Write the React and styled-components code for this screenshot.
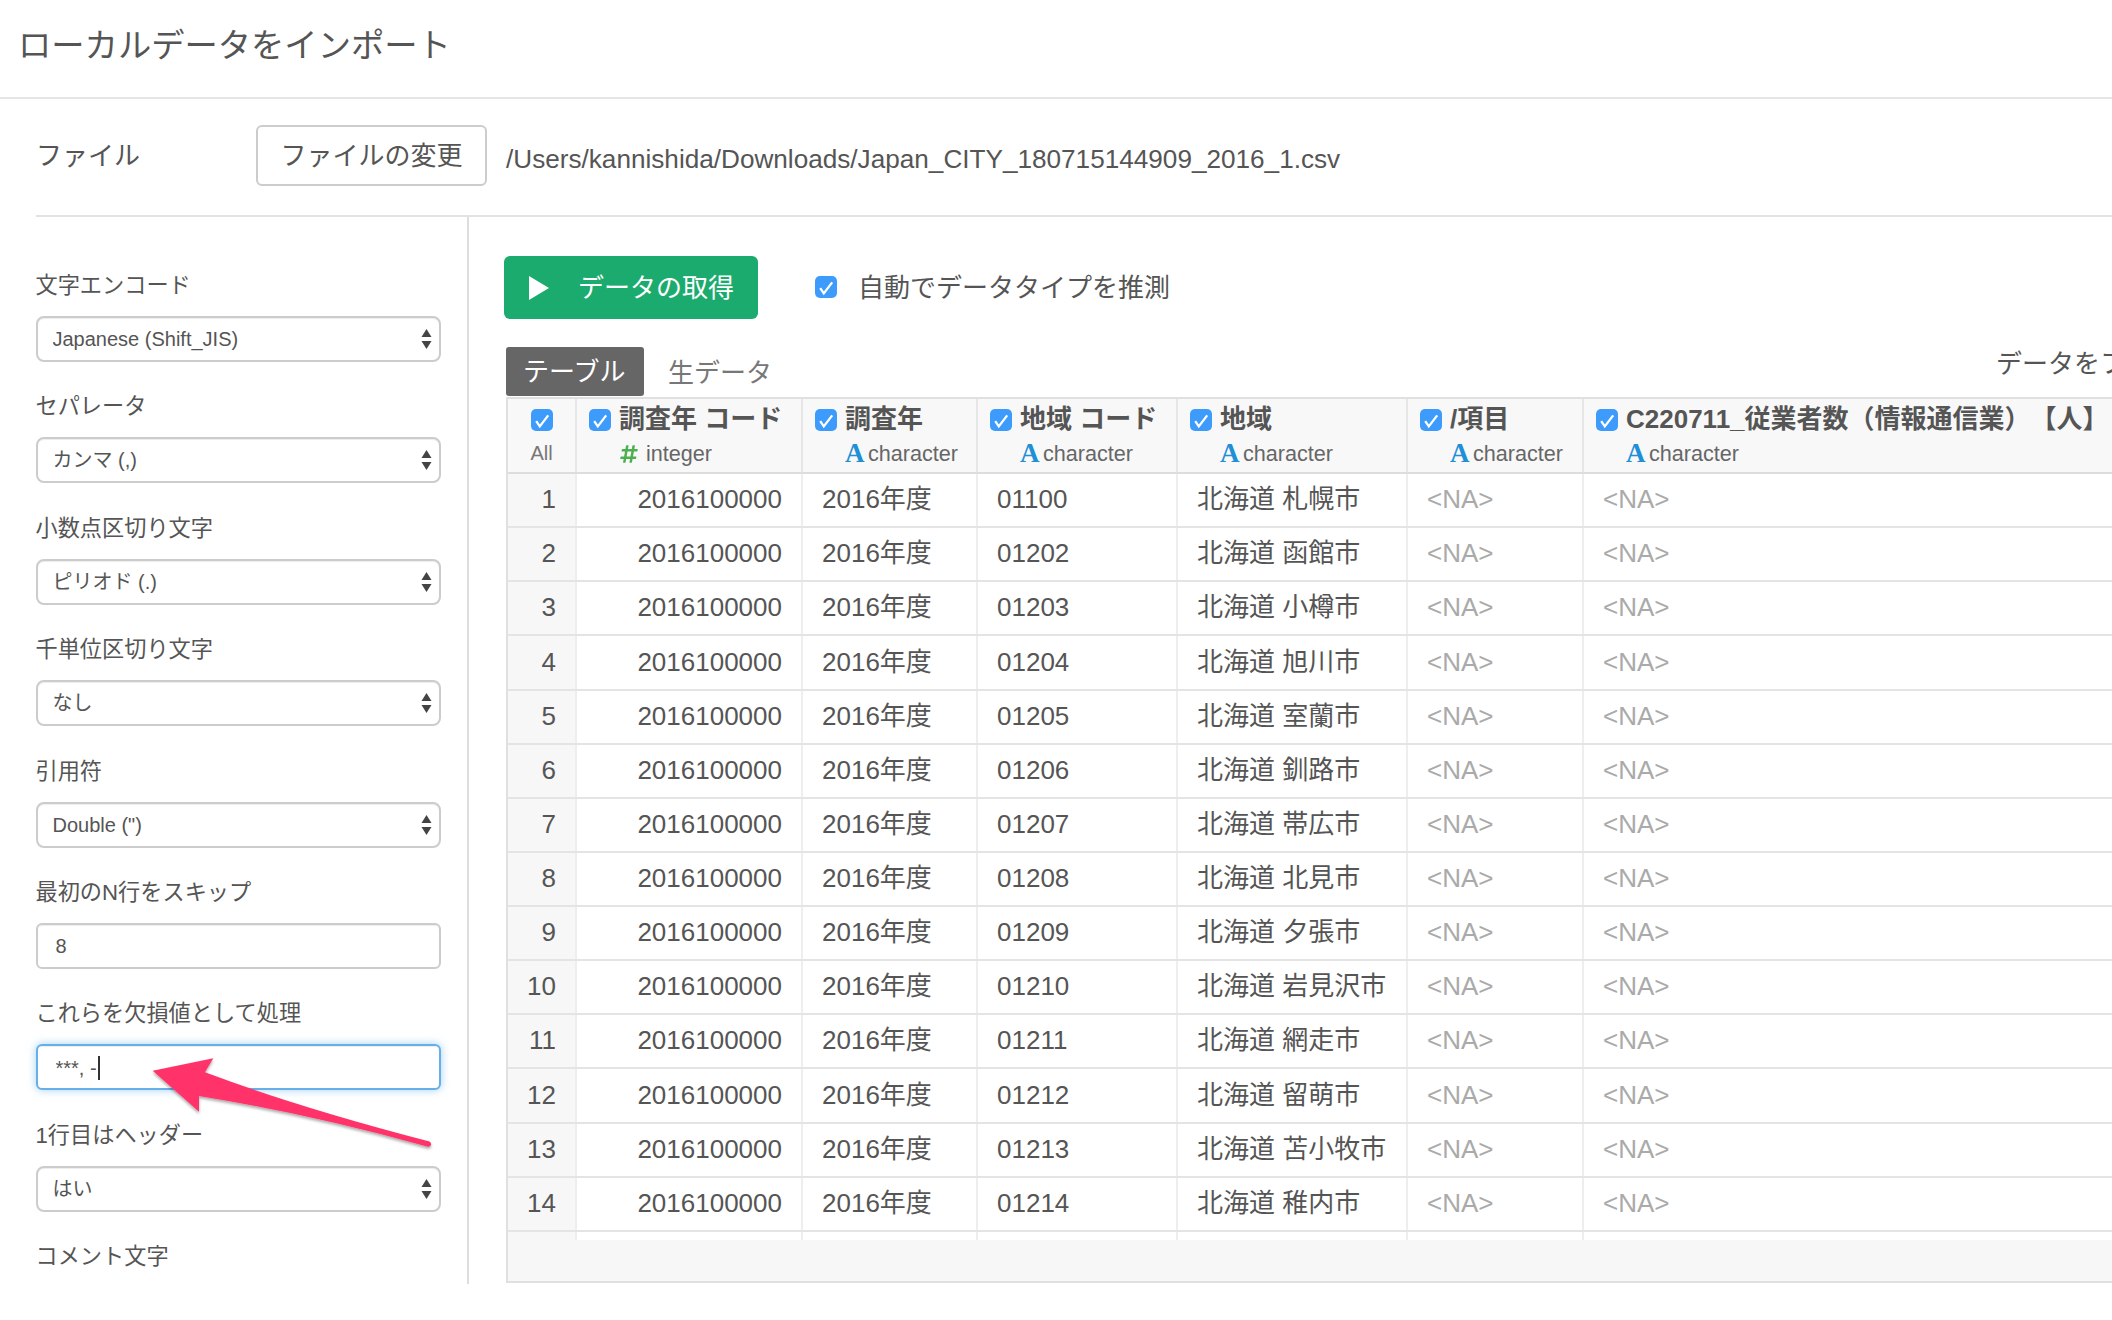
import React from "react";
import styled, { createGlobalStyle } from "styled-components";
import { FaHashtag } from "react-icons/fa";

const GlobalStyle = createGlobalStyle`
  html, body { margin: 0; padding: 0; background: #fff; }
  body {
    width: 2112px;
    height: 1320px;
    overflow: hidden;
    font-family: "Liberation Sans", "Noto Sans CJK JP", sans-serif;
    line-height: 1.3;
    text-spacing-trim: space-all;
    color: #555;
  }
  * { box-sizing: border-box; }
`;

const Page = styled.div`
  position: relative;
  width: 2112px;
  height: 1320px;
  overflow: hidden;
`;

const TitleBar = styled.header`
  height: 99px;
  padding: 0 0 6px 18px;
  display: flex;
  align-items: center;
  border-bottom: 2px solid #e5e5e5;
`;

const Title = styled.h1`
  margin: 0;
  font-size: 33.3px;
  font-weight: 400;
  color: #555;
`;

const FileRow = styled.div`
  height: 118px;
  margin-left: 36px;
  padding-bottom: 3px;
  display: flex;
  align-items: center;
  border-bottom: 2px solid #e2e2e2;
`;

const FileLabel = styled.div`
  width: 220px;
  padding-top: 2px;
  font-size: 26px;
  color: #555;
`;

const FileButton = styled.button`
  width: 231px;
  height: 61px;
  padding: 2px 0 0;
  border: 2px solid #ccc;
  border-radius: 6px;
  background: #fff;
  font: inherit;
  font-size: 26px;
  color: #555;
`;

const FilePath = styled.div`
  margin: 6px 0 0 19px;
  font-size: 26.15px;
  color: #555;
  white-space: nowrap;
`;

const Body = styled.div`
  display: flex;
  height: 1067px;
`;

const Sidebar = styled.aside`
  flex: 0 0 469px;
  height: 100%;
  padding: 52px 0 0 35.5px;
  border-right: 2px solid #ddd;
  overflow: hidden;
`;

const Field = styled.div`
  width: 405px;
  margin-bottom: 28.4px;
`;

const FieldLabel = styled.label`
  display: block;
  height: 32px;
  margin-bottom: 15px;
  font-size: 22.2px;
  line-height: 34px;
  color: #555;
  white-space: nowrap;
`;

const SelectWrap = styled.div`
  position: relative;
  height: 46px;
`;

const Select = styled.select`
  width: 100%;
  height: 46px;
  padding: 0 30px 0 15px;
  appearance: none;
  border: 2px solid #ccc;
  border-radius: 8px;
  background: #fff;
  box-shadow: inset 0 1px 1px rgba(0, 0, 0, 0.075);
  font: inherit;
  font-size: 20px;
  color: #555;
`;

const SelectArrows = styled.svg`
  position: absolute;
  top: 13px;
  right: 9px;
  width: 11px;
  height: 20px;
  pointer-events: none;
`;

const Input = styled.input`
  width: 100%;
  height: 46px;
  padding: 2px 18px 0;
  border: 2px solid ${(p) => (p.$focused ? "#66afe9" : "#ccc")};
  border-radius: 6px;
  outline: none;
  background: #fff;
  box-shadow: ${(p) =>
    p.$focused
      ? "inset 0 1px 1px rgba(0,0,0,.075), 0 0 8px rgba(102,175,233,.6)"
      : "inset 0 1px 1px rgba(0,0,0,.075)"};
  font: inherit;
  font-size: 20px;
  color: #555;
`;

const Caret = styled.span`
  position: absolute;
  left: 62px;
  top: 12px;
  width: 2px;
  height: 24px;
  background: #333;
`;

const Main = styled.main`
  flex: 1;
  min-width: 0;
  padding: 39px 0 0 35px;
  overflow: hidden;
`;

const ActionRow = styled.div`
  display: flex;
  align-items: center;
  height: 63px;
`;

const RunButton = styled.button`
  width: 254px;
  height: 63px;
  padding: 0 0 0 25px;
  display: flex;
  align-items: center;
  gap: 29px;
  border: none;
  border-radius: 6px;
  background: #1cab6e;
  font: inherit;
  font-size: 26px;
  color: #fff;
`;

const LowerText = styled.span`
  padding-top: 2px;
`;

const AutoLabel = styled.div`
  margin-left: 57px;
  display: flex;
  align-items: center;
  gap: 21px;
  font-size: 26px;
  color: #555;
`;

const Box = styled.span`
  flex: 0 0 auto;
  display: inline-flex;
  width: 22px;
  height: 22px;
  border-radius: 5px;
  background: #3d9bfb;
`;

const TabBar = styled.div`
  margin: 28px 0 1px 2px;
  display: flex;
  align-items: flex-end;
  height: 49px;
  width: 1640px;
`;

const Tabs = styled.div`
  flex: 0 0 1490px;
  display: flex;
  align-items: stretch;
  height: 49px;
`;

const Tab = styled.div`
  width: 138px;
  display: flex;
  align-items: center;
  padding-left: ${(p) => (p.$active ? "17px" : "24px")};
  padding-top: ${(p) => (p.$active ? "2px" : "5px")};
  border-radius: 3px;
  background: ${(p) => (p.$active ? "#666" : "transparent")};
  color: ${(p) => (p.$active ? "#fff" : "#777")};
  font-size: 26px;
  white-space: nowrap;
`;

const FilterLink = styled.div`
  align-self: flex-start;
  padding-top: 1px;
  font-size: 26px;
  color: #555;
  white-space: nowrap;
`;

const Table = styled.div`
  margin-left: 2px;
  width: 1640px;
  height: 886px;
  display: flex;
  flex-direction: column;
  border: 2px solid #e0e0e0;
  border-right: none;
  overflow: hidden;
`;

const columns = "69px 226px 175px 200px 230px 176px 1fr";

const HeadRow = styled.div`
  flex: 0 0 auto;
  display: grid;
  grid-template-columns: ${columns};
  height: 75px;
  background: #f8f8f8;
  border-bottom: 2px solid #ddd;
`;

const HeadCell = styled.div`
  padding: 3px 0 0 12px;
  border-right: 2px solid #e6e6e6;
  white-space: nowrap;
`;

const AllCell = styled(HeadCell)`
  padding-left: 0;
  display: flex;
  flex-direction: column;
  align-items: center;
`;

const NameLine = styled.div`
  height: 36px;
  display: flex;
  align-items: center;
  gap: 8px;
  font-size: 26px;
  font-weight: 700;
  color: #555;
`;

const AllCheck = styled.div`
  height: 36px;
  display: flex;
  align-items: center;
`;

const AllText = styled.div`
  height: 30px;
  line-height: 30px;
  font-size: 20px;
  color: #777;
`;

const TypeLine = styled.div`
  height: 32px;
  padding-left: 30px;
  display: flex;
  align-items: center;
  font-size: 21.6px;
  color: #666;
`;

const TypeA = styled.span`
  width: 23px;
  font-family: "Liberation Serif", serif;
  font-weight: 700;
  font-size: 27px;
  color: #1f8fd6;
`;

const TypeHash = styled.span`
  width: 27px;
  display: inline-flex;
  align-items: center;
  color: #4caf50;
  font-size: 20px;
`;

const DataRow = styled.div`
  flex: 0 0 54.14px;
  display: grid;
  grid-template-columns: ${columns};
  border-bottom: 2px solid #e4e4e4;
`;

const Cell = styled.div`
  display: flex;
  align-items: center;
  justify-content: ${(p) => (p.$right ? "flex-end" : "flex-start")};
  padding: 0 19px;
  border-right: 2px solid #eee;
  background: ${(p) => (p.$shade ? "#f7f7f7" : "#fff")};
  font-size: 26px;
  color: ${(p) => (p.$na ? "#aaa" : "#555")};
  white-space: nowrap;
`;

const StubRow = styled.div`
  flex: 0 0 8px;
  display: grid;
  grid-template-columns: ${columns};
`;

const StubCell = styled.div`
  border-right: 2px solid #eee;
  background: ${(p) => (p.$shade ? "#f7f7f7" : "#fff")};
`;

const TableFooter = styled.div`
  flex: 1;
  background: #f7f7f7;
`;

const Arrow = styled.svg`
  position: absolute;
  left: 140px;
  top: 1045px;
  width: 310px;
  height: 115px;
  overflow: visible;
  pointer-events: none;
`;

const Check = () => (
  <Box>
    <svg width="22" height="22" viewBox="0 0 22 22" fill="none">
      <path d="M5.2 12.2 L8.8 17.4 L17.2 6.4" stroke="#fff" strokeWidth="2.3" />
    </svg>
  </Box>
);

const Arrows = () => (
  <SelectArrows viewBox="0 0 11 20">
    <path d="M5.5 0 L10.5 8 H0.5 Z M0.5 12 H10.5 L5.5 20 Z" fill="#444" />
  </SelectArrows>
);

const selects = [
  ["文字エンコード", "Japanese (Shift_JIS)"],
  ["セパレータ", "カンマ (,)"],
  ["小数点区切り文字", "ピリオド (.)"],
  ["千単位区切り文字", "なし"],
  ["引用符", 'Double (")'],
];

const headers = [
  { name: "調査年 コード", type: "integer" },
  { name: "調査年", type: "character" },
  { name: "地域 コード", type: "character" },
  { name: "地域", type: "character" },
  { name: "/項目", type: "character" },
  { name: "C220711_従業者数（情報通信業）【人】", type: "character" },
];

const rows = [
  ["01100", "札幌市"],
  ["01202", "函館市"],
  ["01203", "小樽市"],
  ["01204", "旭川市"],
  ["01205", "室蘭市"],
  ["01206", "釧路市"],
  ["01207", "帯広市"],
  ["01208", "北見市"],
  ["01209", "夕張市"],
  ["01210", "岩見沢市"],
  ["01211", "網走市"],
  ["01212", "留萌市"],
  ["01213", "苫小牧市"],
  ["01214", "稚内市"],
];

const SelectField = ({ label, value }) => (
  <Field>
    <FieldLabel>{label}</FieldLabel>
    <SelectWrap>
      <Select defaultValue={value}>
        <option value={value}>{value}</option>
      </Select>
      <Arrows />
    </SelectWrap>
  </Field>
);

export default function App() {
  return (
    <Page>
      <GlobalStyle />
      <TitleBar>
        <Title>ローカルデータをインポート</Title>
      </TitleBar>
      <FileRow>
        <FileLabel>ファイル</FileLabel>
        <FileButton>ファイルの変更</FileButton>
        <FilePath>/Users/kannishida/Downloads/Japan_CITY_180715144909_2016_1.csv</FilePath>
      </FileRow>
      <Body>
        <Sidebar>
          {selects.map(([label, value]) => (
            <SelectField key={label} label={label} value={value} />
          ))}
          <Field>
            <FieldLabel>最初のN行をスキップ</FieldLabel>
            <SelectWrap>
              <Input readOnly value="8" />
            </SelectWrap>
          </Field>
          <Field>
            <FieldLabel>これらを欠損値として処理</FieldLabel>
            <SelectWrap>
              <Input readOnly $focused value="***, -" />
              <Caret />
            </SelectWrap>
          </Field>
          <SelectField label="1行目はヘッダー" value="はい" />
          <Field>
            <FieldLabel>コメント文字</FieldLabel>
          </Field>
        </Sidebar>
        <Main>
          <ActionRow>
            <RunButton>
              <svg width="20" height="24" viewBox="0 0 20 24">
                <path d="M0 0 L20 12 L0 24 Z" fill="#fff" />
              </svg>
              <LowerText>データの取得</LowerText>
            </RunButton>
            <AutoLabel>
              <Check />
              <LowerText>自動でデータタイプを推測</LowerText>
            </AutoLabel>
          </ActionRow>
          <TabBar>
            <Tabs>
              <Tab $active>テーブル</Tab>
              <Tab>生データ</Tab>
            </Tabs>
            <FilterLink>データをフィルタ</FilterLink>
          </TabBar>
          <Table>
            <HeadRow>
              <AllCell>
                <AllCheck>
                  <Check />
                </AllCheck>
                <AllText>All</AllText>
              </AllCell>
              {headers.map((h) => (
                <HeadCell key={h.name}>
                  <NameLine>
                    <Check />
                    {h.name}
                  </NameLine>
                  <TypeLine>
                    {h.type === "integer" ? (
                      <TypeHash>
                        <FaHashtag />
                      </TypeHash>
                    ) : (
                      <TypeA>A</TypeA>
                    )}
                    {h.type}
                  </TypeLine>
                </HeadCell>
              ))}
            </HeadRow>
            {rows.map(([code, city], i) => (
              <DataRow key={code}>
                <Cell $right $shade>{i + 1}</Cell>
                <Cell $right>2016100000</Cell>
                <Cell>2016年度</Cell>
                <Cell>{code}</Cell>
                <Cell>北海道 {city}</Cell>
                <Cell $na>&lt;NA&gt;</Cell>
                <Cell $na>&lt;NA&gt;</Cell>
              </DataRow>
            ))}
            <StubRow>
              <StubCell $shade />
              <StubCell />
              <StubCell />
              <StubCell />
              <StubCell />
              <StubCell />
              <StubCell />
            </StubRow>
            <TableFooter />
          </Table>
        </Main>
      </Body>
      <Arrow viewBox="140 1045 310 115">
        <defs>
          <filter id="arrowShadow" x="-10%" y="-10%" width="120%" height="130%">
            <feDropShadow dx="0" dy="2" stdDeviation="1.6" floodColor="#000" floodOpacity="0.35" />
          </filter>
        </defs>
        <path
          d="M152.7 1070.7 L213.3 1058.3 L205 1072.3 Q300 1108 429.5 1141.5 Q431.5 1143 431 1145 Q430 1147.5 427 1146.5 Q310 1114 199 1096 L199 1111.7 Z"
          fill="#ff3369"
          filter="url(#arrowShadow)"
        />
      </Arrow>
    </Page>
  );
}
